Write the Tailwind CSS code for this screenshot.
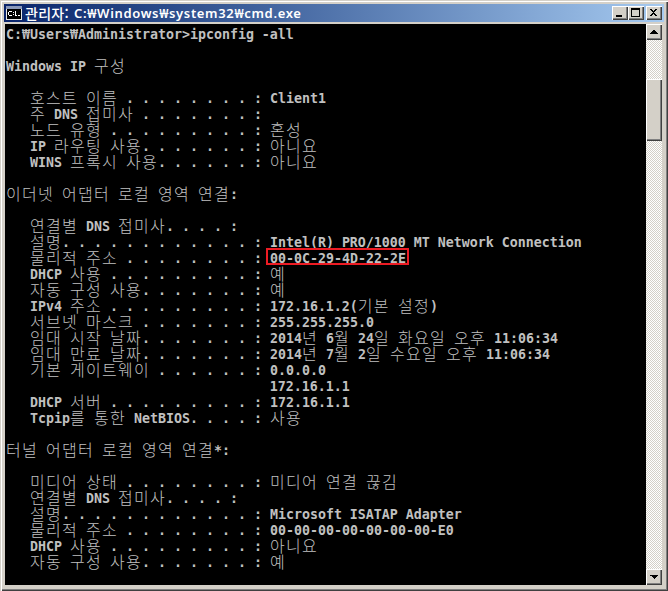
<!DOCTYPE html>
<html lang="ko">
<head>
    <meta charset="UTF-8">
    <title>cmd.exe</title>
    <script src="https://cdn.jsdelivr.net/npm/@tailwindcss/browser@4"></script>
</head>
<body class="bg-[#d4d0c8]">

    <div class="w-[668px] h-[591px] flex flex-col bg-[#d4d0c8] overflow-hidden shadow-[inset_1px_1px_0_#d4d0c8,inset_2px_2px_0_#fff,inset_-1px_-1px_0_#404040,inset_-2px_-2px_0_#808080] px-[4px] pt-[4px] pb-[6px]">

        <!-- title bar -->
        <div class="h-[18px] shrink-0 flex items-center bg-gradient-to-r from-[#0a246a] to-[#a6caf0] pl-[2px] pr-[2px]">
            <svg width="16" height="14" viewBox="0 0 16 14" class="shrink-0" shape-rendering="crispEdges">
                <rect x="0" y="0" width="16" height="14" fill="#e8e8e8"/>
                <rect x="0" y="0" width="16" height="3" fill="#8a98b8"/>
                <rect x="1" y="3" width="14" height="10" fill="#000"/>
                <rect x="3" y="5" width="3" height="1" fill="#fff"/><rect x="2" y="6" width="1" height="3" fill="#fff"/><rect x="3" y="9" width="3" height="1" fill="#fff"/>
                <rect x="7" y="6" width="1" height="1" fill="#fff"/><rect x="7" y="8" width="1" height="1" fill="#fff"/>
                <rect x="9" y="5" width="1" height="5" fill="#fff"/><rect x="10" y="9" width="1" height="1" fill="#fff"/>
                <rect x="12" y="9" width="2" height="1" fill="#fff"/>
            </svg>
            <div class="ml-[3px] flex items-center h-[18px] text-white whitespace-pre leading-[18px]">
                <span class="text-[14px] font-medium tracking-[0.3px] font-['Noto_Sans_CJK_KR',sans-serif]">관리자:</span>
                <span class="ml-[5px] text-[13px] font-semibold tracking-[0.65px] font-['Noto_Sans',sans-serif]">C:₩Windows₩system32₩cmd.exe</span>
            </div>
            <div class="ml-auto flex items-center">
                <button class="w-[16px] h-[14px] bg-[#d4d0c8] flex items-center justify-center shadow-[inset_1px_1px_0_#fff,inset_-1px_-1px_0_#404040,inset_-2px_-2px_0_#808080]">
                    <svg width="16" height="14" viewBox="0 0 16 14" shape-rendering="crispEdges"><rect x="4" y="9" width="6" height="2" fill="#000"/></svg>
                </button>
                <button class="w-[16px] h-[14px] bg-[#d4d0c8] flex items-center justify-center shadow-[inset_1px_1px_0_#fff,inset_-1px_-1px_0_#404040,inset_-2px_-2px_0_#808080]">
                    <svg width="16" height="14" viewBox="0 0 16 14" shape-rendering="crispEdges"><path d="M3 2h9v9H3z M4 4v6h7V4z" fill="#000" fill-rule="evenodd"/></svg>
                </button>
                <button class="ml-[2px] w-[16px] h-[14px] bg-[#d4d0c8] flex items-center justify-center shadow-[inset_1px_1px_0_#fff,inset_-1px_-1px_0_#404040,inset_-2px_-2px_0_#808080]">
                    <svg width="16" height="14" viewBox="0 0 16 14" shape-rendering="crispEdges"><path d="M4 3h2v1h1v1h1V4h1V3h2v1h-1v1H9v1H8v1h1v1h1v1h1v1H9V9H8V8H7v1H6v1H4V9h1V8h1V7h1V6H6V5H5V4H4z" fill="#000"/></svg>
                </button>
            </div>
        </div>

        <!-- console + scrollbar -->
        <div class="mt-[2px] ml-[1px] mr-[2px] flex-1 flex min-h-0">
            <div class="relative flex-1 bg-black overflow-hidden">
                <div id="console" class="pt-[2px] pl-[1px] text-[#c0c0c0]"></div>
                <!-- red box from the screenshot -->
                <div class="absolute left-[261px] top-[224px] w-[143px] h-[17px] border-2 border-[#ed1c24]"></div>
            </div>

            <div class="w-[16px] shrink-0 flex flex-col bg-[repeating-conic-gradient(#ffffff_0_25%,#d4d0c8_0_50%)] bg-[length:2px_2px]">
                <button class="h-[16px] shrink-0 bg-[#d4d0c8] flex items-center justify-center shadow-[inset_1px_1px_0_#fff,inset_-1px_-1px_0_#404040,inset_-2px_-2px_0_#808080]">
                    <svg width="8" height="5" viewBox="0 0 8 5" shape-rendering="crispEdges"><path d="M4 0h1v1h1v1h1v1h1v1H0V3h1V2h1V1h1V0z" fill="#000"/></svg>
                </button>
                <div class="mt-[39px] h-[62px] shrink-0 bg-[#d4d0c8] shadow-[inset_1px_1px_0_#fff,inset_-1px_-1px_0_#404040,inset_-2px_-2px_0_#808080]"></div>
                <button class="mt-auto h-[16px] shrink-0 bg-[#d4d0c8] flex items-center justify-center shadow-[inset_1px_1px_0_#fff,inset_-1px_-1px_0_#404040,inset_-2px_-2px_0_#808080]">
                    <svg width="8" height="5" viewBox="0 0 8 5" shape-rendering="crispEdges"><path d="M0 0h8v1H7v1H6v1H5v1H4V3H3V2H2V1H0z" fill="#000"/></svg>
                </button>
            </div>
        </div>
    </div>

    <script>
        const lines = [
            'C:₩Users₩Administrator>ipconfig -all',
            '',
            'Windows IP 구성',
            '',
            '   호스트 이름 . . . . . . . . : Client1',
            '   주 DNS 접미사 . . . . . . . :',
            '   노드 유형 . . . . . . . . . : 혼성',
            '   IP 라우팅 사용. . . . . . . : 아니요',
            '   WINS 프록시 사용. . . . . . : 아니요',
            '',
            '이더넷 어댑터 로컬 영역 연결:',
            '',
            '   연결별 DNS 접미사. . . . :',
            '   설명. . . . . . . . . . . . : Intel(R) PRO/1000 MT Network Connection',
            '   물리적 주소 . . . . . . . . : 00-0C-29-4D-22-2E',
            '   DHCP 사용 . . . . . . . . . : 예',
            '   자동 구성 사용. . . . . . . : 예',
            '   IPv4 주소 . . . . . . . . . : 172.16.1.2(기본 설정)',
            '   서브넷 마스크 . . . . . . . : 255.255.255.0',
            '   임대 시작 날짜. . . . . . . : 2014년 6월 24일 화요일 오후 11:06:34',
            '   임대 만료 날짜. . . . . . . : 2014년 7월 2일 수요일 오후 11:06:34',
            '   기본 게이트웨이 . . . . . . : 0.0.0.0',
            '                                 172.16.1.1',
            '   DHCP 서버 . . . . . . . . . : 172.16.1.1',
            '   Tcpip를 통한 NetBIOS. . . . : 사용',
            '',
            '터널 어댑터 로컬 영역 연결*:',
            '',
            '   미디어 상태 . . . . . . . . : 미디어 연결 끊김',
            '   연결별 DNS 접미사. . . . :',
            '   설명. . . . . . . . . . . . : Microsoft ISATAP Adapter',
            '   물리적 주소 . . . . . . . . : 00-00-00-00-00-00-00-E0',
            '   DHCP 사용 . . . . . . . . . : 아니요',
            '   자동 구성 사용. . . . . . . : 예',
        ];

        const consoleBox = document.getElementById('console');

        // hangul is two cells wide, everything else one cell
        lines.forEach((line) => {
            const row = document.createElement('div');
            row.className = 'h-[16px] whitespace-pre flex items-start';
            line.split(/([\uac00-\ud7a3]+)/).forEach((run, i) => {
                if (!run) return;
                const span = document.createElement('span');
                span.textContent = run;
                span.className = i % 2
                    ? "block h-[16px] leading-[15px] text-[16px] tracking-[1.28px] font-light font-['Noto_Sans_CJK_KR',sans-serif]"
                    : "block h-[16px] leading-[17px] text-[13.29px] font-bold font-['DejaVu_Sans_Mono',monospace]";
                row.appendChild(span);
            });
            consoleBox.appendChild(row);
        });
    </script>
</body>
</html>
